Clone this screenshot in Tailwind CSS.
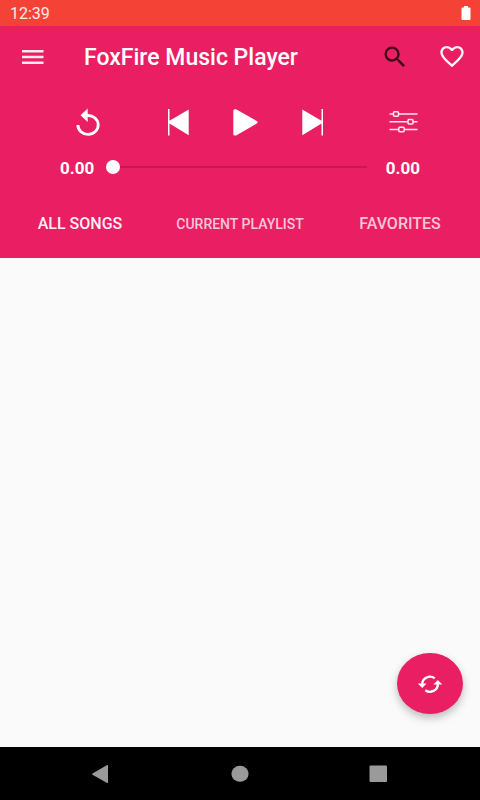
<!DOCTYPE html>
<html lang="en">
<head>
<meta charset="utf-8">
<meta name="viewport" content="width=device-width, initial-scale=1">
<title>FoxFire Music Player</title>
<script src="https://cdn.jsdelivr.net/npm/@tailwindcss/browser@4"></script>
</head>
<body class="flex min-h-screen flex-col bg-[#fafafa] font-['Roboto',sans-serif] text-white">
  <div class="flex h-[26px] items-center justify-between bg-[#f44336] pr-2 pl-[10px]">
    <span class="pt-[2px] text-base leading-6 text-white/90">12:39</span>
    <svg class="h-[15px] w-3" viewBox="0 0 12 15" fill="currentColor" aria-label="Battery full"><path d="M4 0h4v1.500h1.500a1 1 0 0 1 1 1v10.500a1 1 0 0 1-1 1h-7a1 1 0 0 1-1-1V2.500a1 1 0 0 1 1-1H4z"/></svg>
  </div>

  <header class="bg-[#e91e63]">
    <div class="flex h-[62px] items-center pr-[14px] pl-[18px]">
      <button type="button" aria-label="Open menu" class="mr-9 text-white/90">
        <svg class="h-7 w-[30px]" viewBox="0 0 30 28" fill="currentColor"><path d="M4 7h21.500v2.500H4zM4 12.700h21.500v2.500H4zM4 18.400h21.500v2.500H4z"/></svg>
      </button>
      <h1 class="flex-1 pt-[2px] text-[23px] leading-8 font-medium whitespace-nowrap">FoxFire Music Player</h1>
      <button type="button" aria-label="Search" class="mr-[29px] text-[#3a0819]">
        <svg class="h-7 w-7" viewBox="0 0 24 24" fill="currentColor"><path d="M15.500 14h-.79l-.28-.27A6.470 6.470 0 0 0 16 9.500 6.500 6.500 0 1 0 9.500 16c1.610 0 3.090-.59 4.230-1.570l.27.28v.79l5 4.990L20.490 19l-4.990-5zm-6 0C7.010 14 5 11.990 5 9.500S7.010 5 9.500 5 14 7.010 14 9.500 11.990 14 9.500 14z"/></svg>
      </button>
      <button type="button" aria-label="Favorite" class="text-white/95">
        <svg class="h-7 w-7" viewBox="0 0 24 24" fill="currentColor"><path d="M16.500 2.500c-1.740 0-3.410.81-4.500 2.090C10.910 3.310 9.240 2.500 7.500 2.500 4.420 2.500 2 4.920 2 8c0 3.780 3.400 6.860 8.550 11.540L12 20.850l1.450-1.320C18.600 14.860 22 11.780 22 8c0-3.080-2.420-5.500-5.500-5.500zm-4.400 15.550l-.1.100-.1-.1C7.140 13.740 4 10.890 4 8c0-2 1.500-3.500 3.500-3.500 1.540 0 3.040.99 3.570 2.360h1.870C13.460 5.490 14.960 4.500 16.500 4.500c2 0 3.500 1.500 3.500 3.500 0 2.890-3.140 5.740-7.900 10.050z"/></svg>
      </button>
    </div>

    <div class="flex h-[67px] items-center justify-between pr-[61px] pl-[72px]">
      <button type="button" aria-label="Repeat">
        <svg class="h-8 w-8" viewBox="0 0 32 32" fill="currentColor"><path d="M15.700 2.600V8.100A11.600 10.800 0 1 1 4.400 19H7.400A8.700 8 0 1 0 15.700 11V16L8.500 9.300z"/></svg>
      </button>
      <div class="flex gap-[35px]">
        <button type="button" aria-label="Previous">
          <svg class="h-8 w-8" viewBox="0 0 32 32" fill="currentColor"><path d="M5 3h1.500v11.700L25.700 3.400v25.800L6.500 17.400V29.500H5z"/></svg>
        </button>
        <button type="button" aria-label="Play">
          <svg class="h-8 w-8" viewBox="0 0 32 32" fill="currentColor" stroke="currentColor" stroke-width="3" stroke-linejoin="round"><path d="M4.800 4.800h1L26 16.300 5.800 27.900h-1z"/></svg>
        </button>
        <button type="button" aria-label="Next">
          <svg class="h-8 w-8" viewBox="0 0 32 32" fill="currentColor"><path d="M26 3h-1.500v11.700L5.300 3.400v25.800L24.500 17.400V29.500H26z"/></svg>
        </button>
      </div>
      <button type="button" aria-label="Equalizer" class="text-white/90">
        <svg class="h-8 w-8" viewBox="0 0 32 32" fill="none" stroke="currentColor" stroke-width="1.500"><path d="M2.500 8H6M11.500 8h19M2.500 15.700h18M26.500 15.700h4M2.500 23.500h9M17.500 23.500h13"/><rect x="6.500" y="5.700" width="5" height="4.600" rx="1"/><rect x="21" y="13.400" width="5" height="4.600" rx="1"/><rect x="11.800" y="21.200" width="5.400" height="4.600" rx="1"/></svg>
      </button>
    </div>

    <div class="flex h-6 items-center gap-3 px-[60px] text-[17px] leading-6 font-bold">
      <span class="pt-[2px]">0.00</span>
      <input type="range" min="0" max="100" value="0" aria-label="Song position" class="h-[14px] min-w-0 flex-1 appearance-none bg-transparent bg-[linear-gradient(#c5194f,#c5194f)] bg-[length:calc(100%-14px)_2px] bg-center bg-no-repeat [&::-webkit-slider-thumb]:h-[14px] [&::-webkit-slider-thumb]:w-[14px] [&::-webkit-slider-thumb]:appearance-none [&::-webkit-slider-thumb]:rounded-full [&::-webkit-slider-thumb]:bg-white">
      <span class="pt-[2px]">0.00</span>
    </div>

    <div role="tablist" class="grid h-[79px] grid-cols-3 pt-[10px] font-medium text-white/75">
      <button type="button" role="tab" aria-selected="true" class="text-base text-white/95">ALL SONGS</button>
      <button type="button" role="tab" aria-selected="false" class="text-sm whitespace-nowrap">CURRENT PLAYLIST</button>
      <button type="button" role="tab" aria-selected="false" class="text-base">FAVORITES</button>
    </div>
  </header>

  <main class="flex flex-1 items-end justify-end pr-[17px] pb-[33px]">
    <button type="button" aria-label="Refresh songs" class="flex h-[61px] w-[66px] items-center justify-center rounded-[50%] bg-[#e91e63] shadow-[0_4px_8px_rgba(0,0,0,0.25)]">
      <svg class="h-6 w-7" viewBox="0 0 28 24" fill="none" stroke="currentColor" stroke-width="2.300"><path d="M6.200 12.500A7.800 7.500 0 0 1 18.700 6.300M21.800 12A7.800 7.500 0 0 1 9.300 18.200"/><path fill="currentColor" stroke="none" d="M1.800 11.500h8.800l-4.400 4.500zM17.400 12.500h8.800l-4.400-4.500z"/></svg>
    </button>
  </main>

  <nav aria-label="System" class="flex h-[53px] items-center justify-between bg-black pr-[90px] pl-[88px] text-[#9a9a9a]">
    <button type="button" aria-label="Back"><svg class="h-6 w-6" viewBox="0 0 24 24" fill="currentColor"><path d="M20 3.500v17a.5.5 0 0 1-.8.4L4.500 12.700a.7.7 0 0 1 0-1.200L19.200 3.100a.5.5 0 0 1 .8.400z"/></svg></button>
    <button type="button" aria-label="Home"><svg class="h-6 w-6" viewBox="0 0 24 24" fill="currentColor"><ellipse cx="13" cy="11.800" rx="8.600" ry="8"/></svg></button>
    <button type="button" aria-label="Recent apps"><svg class="h-6 w-6" viewBox="0 0 24 24" fill="currentColor"><rect x="3.500" y="3.500" width="17.500" height="16.500" rx="1"/></svg></button>
  </nav>
</body>
</html>
